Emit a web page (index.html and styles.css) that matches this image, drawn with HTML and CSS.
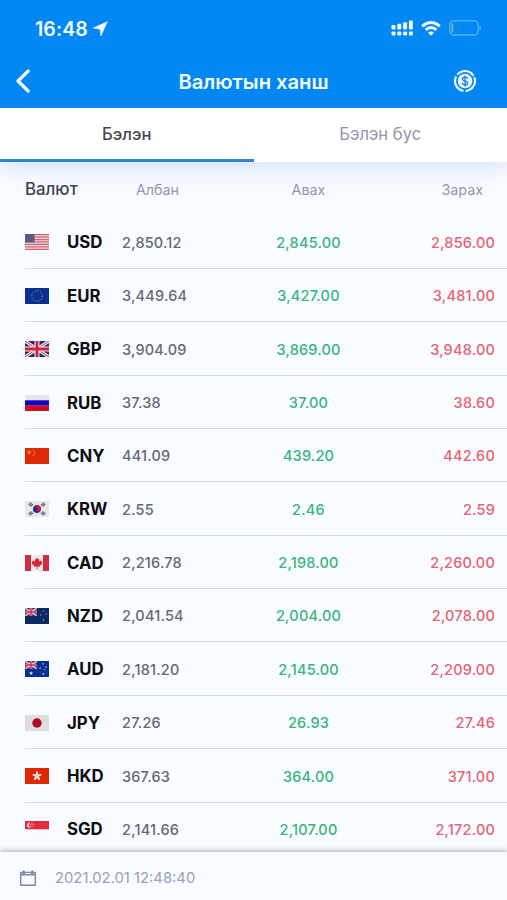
FILE: index.html
```html
<!DOCTYPE html>
<html lang="mn">
<head>
  <meta charset="utf-8">
  <meta name="viewport" content="width=device-width, initial-scale=1">
  <title>Валютын ханш</title>
  <link rel="stylesheet" href="styles.css">
</head>
<body>
  <!-- shared flag parts -->
  <svg width="0" height="0" class="defs">
    <symbol id="star" viewBox="0 0 20 20">
      <path d="M10 0l2.4 7.2H20l-6.1 4.5 2.3 7.3-6.2-4.5L3.8 19l2.3-7.3L0 7.2h7.6z"/>
    </symbol>
    <symbol id="union-jack" viewBox="0 0 24 16" preserveAspectRatio="none">
      <rect width="24" height="16" fill="#1d2a72"/>
      <path d="M0 0l24 16M24 0L0 16" stroke="#eceaf0" stroke-width="3.2"/>
      <path d="M0 0l24 16M24 0L0 16" stroke="#d2324a" stroke-width="1"/>
      <path d="M12 0v16M0 8h24" stroke="#eceaf0" stroke-width="5"/>
      <path d="M12 0v16M0 8h24" stroke="#cf2038" stroke-width="2.8"/>
    </symbol>
  </svg>

  <div class="app">
    <header class="top">
      <div class="status-bar">
        <span class="time">16:48</span>
        <svg class="location" width="15" height="15" viewBox="0 0 14 14"><path d="M13.4.6L.4 6.6l6.2.9.8 6.3z" fill="#f2fbff" stroke="#f2fbff" stroke-width=".6" stroke-linejoin="round"/></svg>
        <svg class="signal" width="23" height="16" viewBox="0 0 23 16" fill="#eefaff">
          <rect x="0.5" y="5" width="4" height="4.6" rx="1"/>
          <rect x="6.3" y="3.7" width="4" height="5.9" rx="1"/>
          <rect x="12.1" y="2.3" width="4" height="7.3" rx="1"/>
          <rect x="17.9" y="0.5" width="4" height="9.1" rx="1"/>
          <rect x="0.5" y="11.5" width="4" height="4" rx="1"/>
          <rect x="6.3" y="11.5" width="4" height="4" rx="1"/>
          <rect x="12.1" y="11.5" width="4" height="4" rx="1"/>
          <rect x="17.9" y="11.5" width="4" height="4" rx="1"/>
        </svg>
        <svg class="wifi" width="20" height="15" viewBox="0 0 20 15" fill="none" stroke="#eefaff" stroke-width="2.9">
          <path d="M1.2 5.3Q10-2.2 18.8 5.3"/>
          <path d="M4.6 8.9Q10 4.2 15.4 8.9"/>
          <path d="M10 14.8l-2.9-3q2.9-2.6 5.8 0z" fill="#eefaff" stroke="none"/>
        </svg>
        <svg class="battery" width="33" height="16" viewBox="0 0 33 16">
          <rect x="0.8" y="0.8" width="28.4" height="14.2" rx="3.8" fill="none" stroke="#58b2f6" stroke-width="1.3"/>
          <rect x="2.5" y="3.2" width="1.8" height="9.6" rx=".8" fill="#75b985"/>
          <path d="M30.5 5.5q3 2.4 0 4.8z" fill="#58b2f6"/>
        </svg>
      </div>
      <div class="nav-bar">
        <svg class="back" width="16" height="24" viewBox="0 0 16 24"><path d="M13.2 2L3 12l10.2 10" fill="none" stroke="#f2fbff" stroke-width="3.2" stroke-linecap="round" stroke-linejoin="round"/></svg>
        <h1>Валютын ханш</h1>
        <svg class="coin" width="24" height="24" viewBox="0 0 24 24">
          <circle cx="12" cy="12" r="10" fill="none" stroke="#e6f7ff" stroke-width="2.2" stroke-dasharray="18.94 2" transform="rotate(-22 12 12)"/>
          <circle cx="12" cy="12" r="7.3" fill="#e6f7ff"/>
          <path d="M14.6 9.9c-.3-1.2-1.3-1.7-2.6-1.7-1.5 0-2.6.7-2.6 1.9 0 2.6 5.2 1.2 5.2 3.8 0 1.2-1.1 1.9-2.6 1.9-1.4 0-2.4-.6-2.7-1.8M12 6.6v10.8" fill="none" stroke="#1583dc" stroke-width="1.3"/>
        </svg>
      </div>
    </header>

    <nav class="tabs">
      <div class="tab active">Бэлэн</div>
      <div class="tab">Бэлэн бус</div>
    </nav>

    <main class="rates">
      <div class="rates-head">
        <span class="title">Валют</span>
        <span>Албан</span>
        <span>Авах</span>
        <span class="last">Зарах</span>
      </div>

      <div class="row">
        <svg class="flag" viewBox="0 0 24 16">
          <rect width="24" height="16" fill="#e6dce4"/>
          <path d="M0 .6h24M0 3.06h24M0 5.52h24M0 7.98h24M0 10.44h24M0 12.9h24M0 15.36h24" stroke="#d9606e" stroke-width="1.25"/>
          <rect width="9.5" height="8.4" fill="#575782"/>
          <path d="M1 2h8M1 4.2h8M1 6.4h8" stroke="#77779c" stroke-width=".6" stroke-dasharray=".7 .8"/>
        </svg>
        <b>USD</b><span class="official">2,850.12</span><span class="buy">2,845.00</span><span class="sell">2,856.00</span>
      </div>
      <div class="row">
        <svg class="flag" viewBox="0 0 24 16">
          <rect width="24" height="16" fill="#0b3095"/>
          <circle cx="12" cy="8" r="5.2" fill="none" stroke="#b3ad60" stroke-width="1" stroke-dasharray="1.1 1.62"/>
        </svg>
        <b>EUR</b><span class="official">3,449.64</span><span class="buy">3,427.00</span><span class="sell">3,481.00</span>
      </div>
      <div class="row">
        <svg class="flag" viewBox="0 0 24 16"><use href="#union-jack" width="24" height="16"/></svg>
        <b>GBP</b><span class="official">3,904.09</span><span class="buy">3,869.00</span><span class="sell">3,948.00</span>
      </div>
      <div class="row">
        <svg class="flag" viewBox="0 0 24 16">
          <rect width="24" height="6" fill="#e4e6ea"/>
          <rect y="5.3" width="24" height="5.4" fill="#1606c4"/>
          <rect y="10.6" width="24" height="5.4" fill="#d30b20"/>
        </svg>
        <b>RUB</b><span class="official">37.38</span><span class="buy">37.00</span><span class="sell">38.60</span>
      </div>
      <div class="row">
        <svg class="flag" viewBox="0 0 24 16">
          <rect width="24" height="16" fill="#df2807"/>
          <g fill="#f5a51b">
            <use href="#star" x="1.6" y="1.8" width="5" height="5"/>
            <circle cx="8.2" cy="1.9" r=".6"/><circle cx="9.6" cy="3.5" r=".6"/>
            <circle cx="9.6" cy="5.7" r=".6"/><circle cx="8.2" cy="7.3" r=".6"/>
          </g>
        </svg>
        <b>CNY</b><span class="official">441.09</span><span class="buy">439.20</span><span class="sell">442.60</span>
      </div>
      <div class="row">
        <svg class="flag" viewBox="0 0 24 16">
          <rect width="24" height="16" fill="#e5e7eb"/>
          <g transform="rotate(18 12 8)">
            <circle cx="12" cy="8" r="4" fill="#173581"/>
            <path d="M8 8a4 4 0 0 1 8 0 2 2 0 0 1-4 0 2 2 0 0 0-4 0z" fill="#c51d3b"/>
          </g>
          <g stroke="#353841" stroke-width="1">
            <path id="bars" d="M3.7 4.1l2-2.6M4.8 4.9l2-2.6M5.9 5.7l2-2.6"/>
            <use href="#bars" transform="rotate(180 12 8)"/>
            <use href="#bars" transform="matrix(1 0 0 -1 0 16)"/>
            <use href="#bars" transform="matrix(-1 0 0 1 24 0)"/>
          </g>
        </svg>
        <b>KRW</b><span class="official">2.55</span><span class="buy">2.46</span><span class="sell">2.59</span>
      </div>
      <div class="row">
        <svg class="flag" viewBox="0 0 24 16">
          <rect width="24" height="16" fill="#e9e9ec"/>
          <path d="M0 0h6v16H0zM18 0h6v16h-6z" fill="#d12c41"/>
          <path d="M12 2.4l1.3 2.1 1-.5-.3 2.7 1.6-1.3.4.9 1.3-.1-.5 1.9.7.5-2.7 2.2.2 1L12.4 11.5v2.7h-.8v-2.7L9 11.8l.2-1L6.5 8.6l.7-.5-.5-1.9 1.3.1.4-.9L10 6.7 9.7 4l1 .5z" fill="#d92330"/>
        </svg>
        <b>CAD</b><span class="official">2,216.78</span><span class="buy">2,198.00</span><span class="sell">2,260.00</span>
      </div>
      <div class="row">
        <svg class="flag" viewBox="0 0 24 16">
          <rect width="24" height="16" fill="#092a62"/>
          <use href="#union-jack" width="12" height="8"/>
          <g fill="#a7a0c1">
            <use href="#star" x="17.3" y="2" width="2.2" height="2.2"/><use href="#star" x="14.5" y="5.7" width="2.2" height="2.2"/>
            <use href="#star" x="20" y="5" width="2.2" height="2.2"/><use href="#star" x="17.2" y="10.8" width="2.6" height="2.6"/>
          </g>
        </svg>
        <b>NZD</b><span class="official">2,041.54</span><span class="buy">2,004.00</span><span class="sell">2,078.00</span>
      </div>
      <div class="row">
        <svg class="flag" viewBox="0 0 24 16">
          <rect width="24" height="16" fill="#073093"/>
          <use href="#union-jack" width="12" height="8"/>
          <g fill="#e4edff">
            <use href="#star" x="4" y="10" width="4.2" height="4.2"/>
            <use href="#star" x="17" y="1.7" width="2.2" height="2.2"/><use href="#star" x="14" y="6" width="2.2" height="2.2"/>
            <use href="#star" x="20" y="5" width="2.2" height="2.2"/><use href="#star" x="17" y="11.6" width="2.6" height="2.6"/>
            <circle cx="19.4" cy="8.6" r=".5"/>
          </g>
        </svg>
        <b>AUD</b><span class="official">2,181.20</span><span class="buy">2,145.00</span><span class="sell">2,209.00</span>
      </div>
      <div class="row">
        <svg class="flag" viewBox="0 0 24 16">
          <rect width="24" height="16" fill="#dddddf"/>
          <circle cx="12" cy="8" r="4.7" fill="#ad092a"/>
        </svg>
        <b>JPY</b><span class="official">27.26</span><span class="buy">26.93</span><span class="sell">27.46</span>
      </div>
      <div class="row">
        <svg class="flag" viewBox="0 0 24 16">
          <rect width="24" height="16" fill="#df2708"/>
          <g fill="#fff0ea">
            <ellipse id="petal" cx="12" cy="5.5" rx="1.1" ry="2.2"/>
            <use href="#petal" transform="rotate(72 12 8)"/>
            <use href="#petal" transform="rotate(144 12 8)"/>
            <use href="#petal" transform="rotate(216 12 8)"/>
            <use href="#petal" transform="rotate(288 12 8)"/>
          </g>
        </svg>
        <b>HKD</b><span class="official">367.63</span><span class="buy">364.00</span><span class="sell">371.00</span>
      </div>
      <div class="row">
        <svg class="flag" viewBox="0 0 24 16">
          <rect width="24" height="16" fill="#f7faff"/>
          <rect width="24" height="8.3" fill="#e22b3c"/>
          <path d="M5.5 1.6a2.7 2.7 0 1 0 0 5.2 3 3 0 0 1 0-5.2z" fill="#fbe5e9"/>
          <g fill="#fbe5e9">
            <circle cx="7" cy="2.2" r=".5"/><circle cx="8.4" cy="3.4" r=".5"/><circle cx="5.8" cy="3.5" r=".5"/>
            <circle cx="7.9" cy="5.2" r=".5"/><circle cx="6.2" cy="5.2" r=".5"/>
          </g>
        </svg>
        <b>SGD</b><span class="official">2,141.66</span><span class="buy">2,107.00</span><span class="sell">2,172.00</span>
      </div>
    </main>

    <footer class="updated">
      <svg width="18" height="18" viewBox="0 0 18 18" fill="none" stroke="#7c87a9" stroke-width="1.4">
        <path d="M1.7 3.4h14.6v12.8H1.7zM1.7 5.8h14.6"/>
        <path d="M3.6 5.6l1.2-4 1.2 4M12 5.6l1.2-4 1.2 4" stroke-linejoin="round"/>
      </svg>
      <span>2021.02.01 12:48:40</span>
    </footer>
  </div>
</body>
</html>
```
FILE: styles.css
```css
* {
  box-sizing: border-box;
}

body {
  margin: 0;
  font-family: Inter, "Liberation Sans", sans-serif;
  background: #f8fbff;
}

.defs {
  display: block;
}

.app {
  display: flex;
  flex-direction: column;
  height: 900px;
  overflow: hidden;
}

/* Blue header */
.top {
  flex: none;
  height: 108px;
  background: #0287f5;
  color: #f2fbff;
}

.status-bar {
  display: flex;
  align-items: center;
  height: 56px;
  padding: 0 25px 0 35px;
}

.time {
  padding-top: 1px;
  font-size: 19.5px;
  font-weight: 600;
  letter-spacing: 0.1px;
}

.location {
  margin-left: 5px;
}

.signal {
  margin-left: auto;
}

.wifi {
  margin-left: 7px;
}

.battery {
  margin-left: 8px;
}

.nav-bar {
  display: grid;
  grid-template-columns: 1fr auto 1fr;
  align-items: center;
  height: 52px;
  padding: 0 15px 2px;
}

.nav-bar h1 {
  margin: 0;
  font-size: 20.2px;
  font-weight: 600;
}

.coin {
  justify-self: end;
  margin-right: 15px;
}

/* Tabs */
.tabs {
  display: flex;
  flex: none;
  height: 54px;
  background: #fff;
  box-shadow: 0 3px 22px rgba(100, 140, 235, 0.28);
  position: relative;
}

.tab {
  flex: 1;
  padding-top: 16px;
  font-size: 16.6px;
  line-height: 20px;
  text-align: center;
  color: #9297ab;
}

.tab.active {
  color: #44474f;
  font-weight: 500;
  border-bottom: 3px solid #2b86cc;
}

/* Rates list */
.rates {
  flex: 1;
  min-height: 0;
  overflow: hidden;
}

.rates-head,
.row {
  display: grid;
  grid-template-columns: 42px 55px 71px 231px 1fr;
  align-items: center;
  margin-left: 25px;
  padding-right: 12px;
}

.rates-head {
  height: 53.6px;
  padding-top: 1px;
  font-size: 14.3px;
  color: #9297ab;
  text-align: center;
}

.rates-head .title {
  grid-column: span 2;
  font-size: 16.8px;
  font-weight: 500;
  text-align: left;
  color: #40434c;
}

.rates-head .last {
  padding-right: 12px;
  text-align: right;
}

.row {
  height: 53.36px;
  padding-top: 1.4px;
  border-bottom: 1.5px solid #c8e2f3;
  font-size: 14.5px;
  letter-spacing: 0.2px;
}

.flag {
  display: block;
  width: 24px;
  height: 16px;
}

.row b {
  font-size: 16.8px;
  font-weight: 700;
  letter-spacing: 0;
  color: #0c0e12;
}

.official {
  font-weight: 500;
  color: #656872;
}

.buy {
  font-weight: 500;
  text-align: center;
  color: #36b57d;
}

.sell {
  font-weight: 500;
  text-align: right;
  color: #e7636f;
}

/* Last update time */
.updated {
  display: flex;
  align-items: center;
  flex: none;
  gap: 18px;
  height: 48px;
  padding: 3px 19px 0;
  background: #f8fbff;
  box-shadow: 0 -1px 5px rgba(40, 50, 70, 0.4);
  font-size: 14.8px;
  color: #9a9fb6;
  position: relative;
}
```
